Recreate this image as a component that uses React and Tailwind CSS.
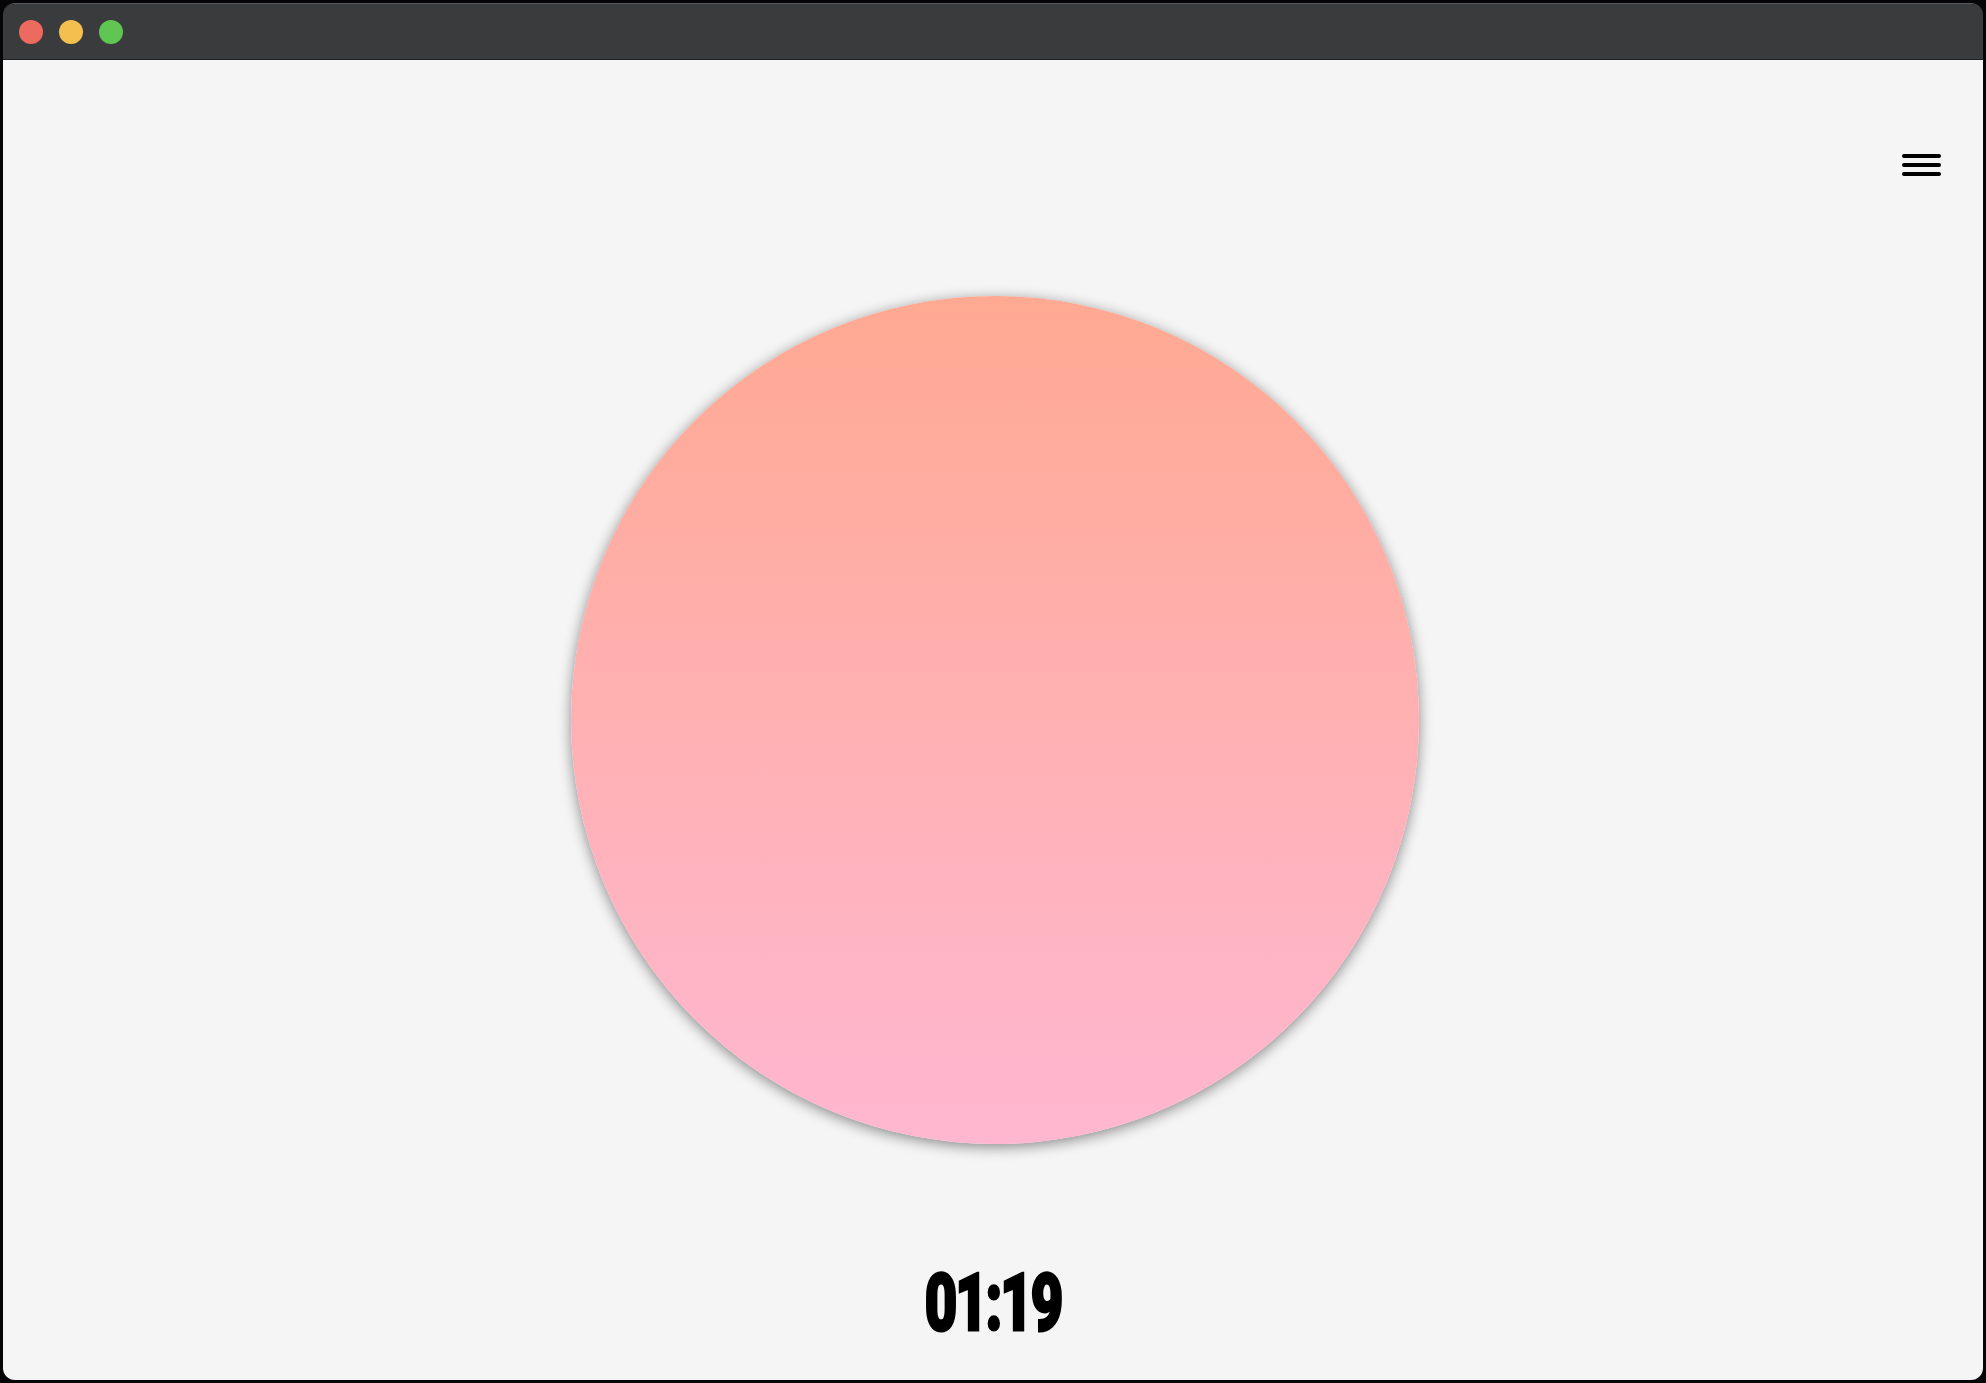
import React from "react";

function TrafficLights() {
  return (
    <div className="flex items-center gap-4 pl-[16px]">
      <span className="w-6 h-6 rounded-full bg-[#ed6a5e]" />
      <span className="w-6 h-6 rounded-full bg-[#f5bf4f]" />
      <span className="w-6 h-6 rounded-full bg-[#61c554]" />
    </div>
  );
}

function MenuButton() {
  return (
    <button className="flex flex-col gap-[5px] w-[39px]" aria-label="Menu">
      <span className="block h-1 w-full rounded-full bg-black" />
      <span className="block h-1 w-full rounded-full bg-black" />
      <span className="block h-1 w-full rounded-full bg-black" />
    </button>
  );
}

export default function App() {
  const seconds = 79;
  const mm = String(Math.floor(seconds / 60)).padStart(2, "0");
  const ss = String(seconds % 60).padStart(2, "0");

  return (
    <div className="w-[1986px] h-[1383px] bg-[#050507] p-[3px]">
      <div className="h-full flex flex-col rounded-[12px] overflow-hidden border-t border-[#5a5b5e]">
        {/* title bar */}
        <div className="h-[56px] shrink-0 bg-[#3a3b3d] border-b border-[#1f2022] flex items-center">
          <TrafficLights />
        </div>

        {/* content */}
        <div className="flex-1 flex flex-col bg-[#f5f5f6]">
          <div className="h-[120px] shrink-0 flex justify-end pt-[94px] pr-[42px]">
            <MenuButton />
          </div>

          <div className="flex-1 flex items-center justify-center pl-[3px]">
            <div className="w-[848px] h-[848px] rounded-full bg-gradient-to-b from-[#ffa992] to-[#ffb7d1] shadow-[0_3px_14px_rgba(0,0,0,0.45)]" />
          </div>

          <div className="h-[120px] shrink-0 flex items-end justify-center pb-[37px]">
            <span className="inline-block origin-center scale-x-[0.71] text-[79px] leading-none font-black tracking-[-3px] text-black [-webkit-text-stroke:3px_black] [font-family:Roboto,'Liberation_Sans',sans-serif]">
              {mm}:{ss}
            </span>
          </div>
        </div>
      </div>
    </div>
  );
}
